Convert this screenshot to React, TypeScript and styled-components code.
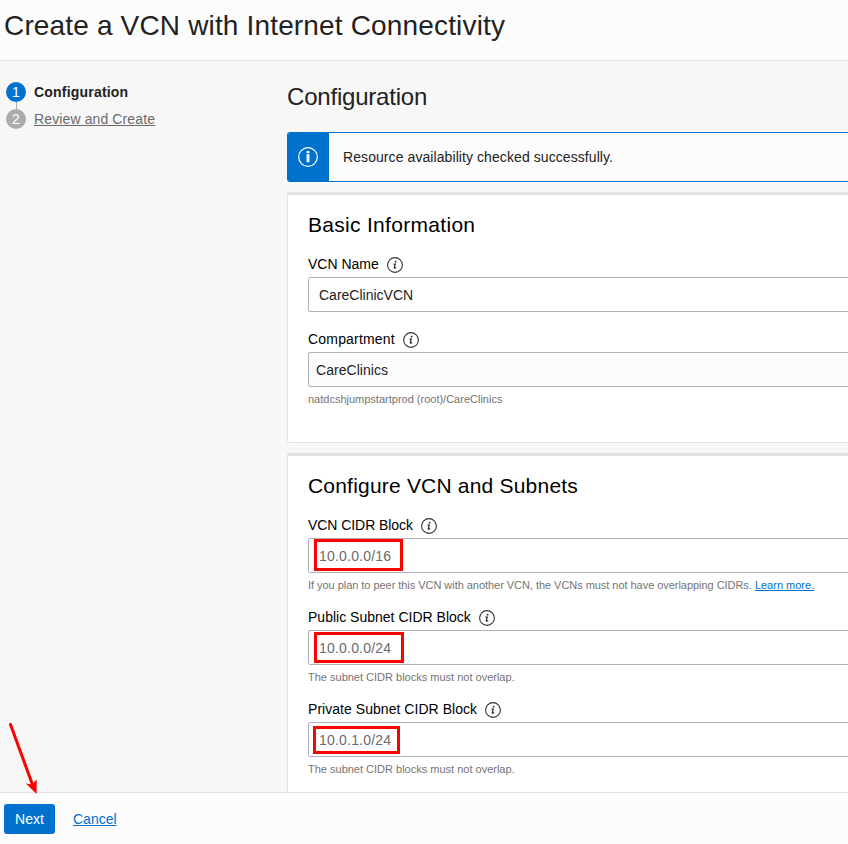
import React from "react";
import styled, { createGlobalStyle } from "styled-components";

const GlobalStyle = createGlobalStyle`
  * { box-sizing: border-box; }
  html, body { margin: 0; padding: 0; overflow: hidden; }
  body {
    font-family: "Liberation Sans", Arial, sans-serif;
    font-size: 14px;
    color: #222;
    background: #f7f7f7;
  }
  h1, h2, h3, p { margin: 0; font-weight: 400; }
`;

const Page = styled.div`
  position: relative;
  display: flex;
  flex-direction: column;
  width: 848px;
  height: 844px;
  overflow: hidden;
  background: #f7f7f7;
`;

const Header = styled.header`
  flex: none;
  height: 61px;
  padding: 9px 4px 0;
  background: #fcfcfc;
  border-bottom: 1px solid #e2e2e4;
`;

const Title = styled.h1`
  font-size: 28px;
  line-height: 34px;
  letter-spacing: 0.16px;
  color: #222;
  white-space: nowrap;
`;

const Body = styled.div`
  flex: 1;
  min-height: 0;
  display: flex;
  overflow: hidden;
`;

const Steps = styled.nav`
  flex: none;
  width: 287px;
  padding: 21px 0 0 6px;
  display: flex;
  flex-direction: column;
`;

const Step = styled.div`
  display: flex;
  align-items: center;
  gap: 8px;
  height: 20px;
`;

const StepNumber = styled.span<{ $active?: boolean }>`
  display: flex;
  align-items: center;
  justify-content: center;
  width: 20px;
  height: 20px;
  border-radius: 50%;
  font-size: 14px;
  color: #fff;
  background: ${(p) => (p.$active ? "#0072ce" : "#aeacab")};
`;

const StepLabel = styled.span<{ $active?: boolean }>`
  font-weight: ${(p) => (p.$active ? 700 : 400)};
  letter-spacing: ${(p) => (p.$active ? 0.2 : 0.12)}px;
  color: ${(p) => (p.$active ? "#222" : "#6b6b6b")};
  text-decoration: ${(p) => (p.$active ? "none" : "underline")};
`;

const StepConnector = styled.span`
  width: 1px;
  height: 7px;
  margin-left: 10px;
  background: #aeacab;
`;

const Main = styled.main`
  flex: none;
  width: 720px;
  padding-top: 20px;
`;

const PageHeading = styled.h2`
  height: 51px;
  font-size: 24px;
  line-height: 32px;
  letter-spacing: -0.2px;
`;

const Notice = styled.div`
  display: flex;
  height: 50px;
  margin-bottom: 10px;
  border: 1px solid #0072ce;
  border-left-width: 0;
  border-radius: 3px;
  background: #fcfcfc;
  overflow: hidden;
`;

const NoticeIcon = styled.div`
  flex: none;
  display: flex;
  align-items: center;
  justify-content: center;
  width: 42px;
  background: #0072ce;
`;

const NoticeText = styled.p`
  padding-left: 14px;
  line-height: 48px;
  letter-spacing: 0.08px;
`;

const Panel = styled.section<{ $height: number }>`
  height: ${(p) => p.$height}px;
  margin-bottom: 10px;
  padding: 18px 20px 0;
  background: #fff;
  border: 1px solid #e1e1e5;
  border-top: 3px solid #e1e1e5;
  border-radius: 3px;
`;

const PanelTitle = styled.h3<{ $spacing: number }>`
  height: 41px;
  font-size: 21px;
  line-height: 24px;
  letter-spacing: ${(p) => p.$spacing}px;
  color: #000;
`;

const Field = styled.div<{ $height: number }>`
  height: ${(p) => p.$height}px;
`;

const FieldLabel = styled.label<{ $spacing?: number }>`
  display: flex;
  align-items: center;
  gap: 8px;
  height: 23px;
  padding-bottom: 4px;
  line-height: 16px;
  letter-spacing: ${(p) => p.$spacing ?? 0}px;
  color: #000;

  svg {
    margin-top: 2px;
  }
`;

const InputBox = styled.div<{ $select?: boolean; $placeholder?: boolean }>`
  height: 35px;
  padding-left: ${(p) => (p.$select ? 7 : 10)}px;
  border: 1px solid #aeb3bb;
  border-radius: 2px;
  line-height: 34px;
  letter-spacing: ${(p) => (p.$placeholder ? 0.2 : p.$select ? 0.05 : 0)}px;
  background: ${(p) => (p.$select ? "#fcfcfc" : "#fff")};
  color: ${(p) => (p.$placeholder ? "#6b6b6b" : "#222")};
`;

const Value = styled.span`
  position: relative;
`;

const Highlight = styled.span<{ $x: number; $y: number; $w: number; $h: number }>`
  position: absolute;
  left: ${(p) => p.$x}px;
  top: ${(p) => p.$y}px;
  width: ${(p) => p.$w}px;
  height: ${(p) => p.$h}px;
  border: 3px solid #fe0000;
`;

const Hint = styled.p<{ $spacing?: number }>`
  padding-top: 6px;
  font-size: 11px;
  line-height: 13px;
  letter-spacing: ${(p) => p.$spacing ?? 0}px;
  color: #747474;
  white-space: nowrap;
`;

const Link = styled.a`
  letter-spacing: 0;
  color: #0072ce;
  text-decoration: underline;
`;

const Footer = styled.footer`
  flex: none;
  display: flex;
  align-items: flex-start;
  gap: 18px;
  height: 52px;
  padding: 11px 4px 0;
  background: #fcfcfc;
  border-top: 1px solid #e2e2e4;
`;

const NextButton = styled.button`
  width: 51px;
  height: 30px;
  padding: 0;
  border: 0;
  border-radius: 3px;
  background: #0072ce;
  color: #fff;
  font: inherit;
`;

const Cancel = styled(Link)`
  line-height: 30px;
`;

const PointerArrow = styled.svg`
  position: absolute;
  left: 0;
  top: 715px;
  width: 50px;
  height: 85px;
`;

const HelpIcon = () => (
  <svg width="16" height="16" viewBox="0 0 16 16" fill="none">
    <circle cx="8" cy="8" r="7.4" stroke="#333" strokeWidth="1.1" />
    <circle cx="8.6" cy="4.7" r="0.9" fill="#222" />
    <path d="M6.5 7.1H8.2L7.3 10.7Q7.2 11.6 9.2 10.5" stroke="#222" strokeWidth="1.15" />
  </svg>
);

const InfoIcon = () => (
  <svg width="20" height="20" viewBox="0 0 20 20" fill="none">
    <circle cx="10" cy="10" r="9.3" stroke="#fff" strokeWidth="1.2" />
    <rect x="8.6" y="4" width="2.8" height="2.2" fill="#fff" />
    <rect x="8.6" y="7.2" width="2.8" height="8" fill="#fff" />
  </svg>
);

type Box = { x: number; y: number; w: number; h: number };

type CidrField = {
  label: string;
  spacing: number;
  value: string;
  hint: string;
  link?: string;
  box: Box;
};

const cidrFields: CidrField[] = [
  {
    label: "VCN CIDR Block",
    spacing: -0.06,
    value: "10.0.0.0/16",
    hint: "If you plan to peer this VCN with another VCN, the VCNs must not have overlapping CIDRs.",
    link: "Learn more.",
    box: { x: -5, y: -9, w: 89, h: 32 },
  },
  {
    label: "Public Subnet CIDR Block",
    spacing: 0.01,
    value: "10.0.0.0/24",
    hint: "The subnet CIDR blocks must not overlap.",
    box: { x: -5, y: -8, w: 90, h: 31 },
  },
  {
    label: "Private Subnet CIDR Block",
    spacing: 0.04,
    value: "10.0.1.0/24",
    hint: "The subnet CIDR blocks must not overlap.",
    box: { x: -6, y: -6, w: 87, h: 28 },
  },
];

export default function App() {
  return (
    <Page>
      <GlobalStyle />
      <Header>
        <Title>Create a VCN with Internet Connectivity</Title>
      </Header>
      <Body>
        <Steps>
          <Step>
            <StepNumber $active>1</StepNumber>
            <StepLabel $active>Configuration</StepLabel>
          </Step>
          <StepConnector />
          <Step>
            <StepNumber>2</StepNumber>
            <StepLabel>Review and Create</StepLabel>
          </Step>
        </Steps>
        <Main>
          <PageHeading>Configuration</PageHeading>
          <Notice>
            <NoticeIcon>
              <InfoIcon />
            </NoticeIcon>
            <NoticeText>Resource availability checked successfully.</NoticeText>
          </Notice>
          <Panel $height={251}>
            <PanelTitle $spacing={0.3}>Basic Information</PanelTitle>
            <Field $height={75}>
              <FieldLabel>
                VCN Name <HelpIcon />
              </FieldLabel>
              <InputBox>CareClinicVCN</InputBox>
            </Field>
            <Field $height={92}>
              <FieldLabel $spacing={0.19}>
                Compartment <HelpIcon />
              </FieldLabel>
              <InputBox $select>CareClinics</InputBox>
              <Hint>natdcshjumpstartprod (root)/CareClinics</Hint>
            </Field>
          </Panel>
          <Panel $height={370}>
            <PanelTitle $spacing={0.2}>Configure VCN and Subnets</PanelTitle>
            {cidrFields.map((f) => (
              <Field key={f.label} $height={92}>
                <FieldLabel $spacing={f.spacing}>
                  {f.label} <HelpIcon />
                </FieldLabel>
                <InputBox $placeholder>
                  <Value>
                    {f.value}
                    <Highlight $x={f.box.x} $y={f.box.y} $w={f.box.w} $h={f.box.h} />
                  </Value>
                </InputBox>
                <Hint $spacing={f.link ? -0.042 : 0}>
                  {f.hint} {f.link && <Link>{f.link}</Link>}
                </Hint>
              </Field>
            ))}
          </Panel>
        </Main>
      </Body>
      <Footer>
        <NextButton>Next</NextButton>
        <Cancel>Cancel</Cancel>
      </Footer>
      <PointerArrow viewBox="0 0 50 85">
        <path d="M10.5 9.5 33 71" stroke="#fe0000" strokeWidth="3" strokeLinecap="round" />
        <path d="M36.5 79 26 68.5 32 69.5 36.8 64.5Z" fill="#fe0000" />
      </PointerArrow>
    </Page>
  );
}
